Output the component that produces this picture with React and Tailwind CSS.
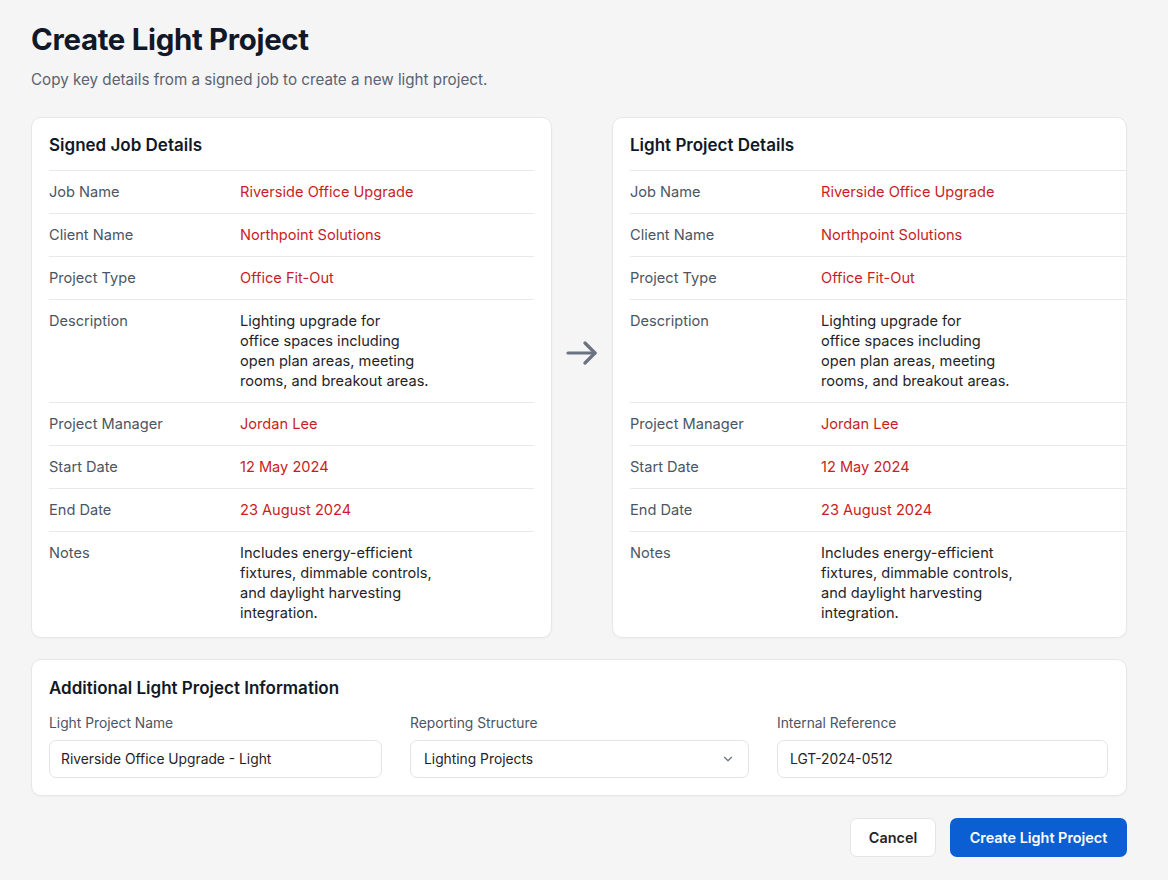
import React from "react";

const rows = [
  ["Job Name", "Riverside Office Upgrade", true],
  ["Client Name", "Northpoint Solutions", true],
  ["Project Type", "Office Fit-Out", true],
  ["Description", ["Lighting upgrade for", "office spaces including", "open plan areas, meeting", "rooms, and breakout areas."], false],
  ["Project Manager", "Jordan Lee", true],
  ["Start Date", "12 May 2024", true],
  ["End Date", "23 August 2024", true],
  ["Notes", ["Includes energy-efficient", "fixtures, dimmable controls,", "and daylight harvesting", "integration."], false],
];

function DetailCard({ title, right }) {
  return (
    <div className={"bg-white border border-[#e6e7ea] rounded-[10px] shadow-[0_1px_2px_rgba(0,0,0,0.03)] pb-[2px] " + (right ? "pl-[17px]" : "px-[17px]")}>
      <div className="h-[53px] flex items-center border-b border-[#e8e9ec]">
        <h2 className="text-[17px] font-semibold text-[#111827] pt-[4px]">{title}</h2>
      </div>
      {rows.map(([label, value, red], i) => (
        <div
          key={label}
          className={"flex pt-[11px] text-[14.6px] leading-[20px] " + (i < rows.length - 1 ? "pb-[11px] border-b border-[#e8e9ec]" : "pb-[12px]")}
        >
          <div className="w-[191px] shrink-0 text-[#4b5563]">{label}</div>
          <div className={red ? "text-[#c81d25]" : "text-[#1f2328]"}>
            {Array.isArray(value)
              ? value.map((l, j) => <div key={j}>{l}</div>)
              : value}
          </div>
        </div>
      ))}
    </div>
  );
}

export default function App() {
  return (
    <div
      className="min-h-[880px] bg-[#f5f5f6] px-[31px] pt-[22px]"
      style={{ fontFamily: "Inter, 'Noto Sans', sans-serif" }}
    >
      <div className="w-[1096px]">
        <h1 className="text-[29.4px] leading-[36px] font-bold text-[#111827] tracking-[-0.3px]">
          Create Light Project
        </h1>
        <p className="mt-[12px] text-[15.2px] leading-[20px] text-[#5b6270]">
          Copy key details from a signed job to create a new light project.
        </p>

        <div className="mt-[27px] grid grid-cols-[521px_60px_515px] items-start">
          <DetailCard title="Signed Job Details" />
          <div className="flex justify-center pt-[224px]">
            <svg width="32" height="24" viewBox="0 0 32 24" fill="none" stroke="#6b7280" strokeWidth="3.2" strokeLinecap="round" strokeLinejoin="round">
              <path d="M2 12h27" />
              <path d="M19 2l10 10-10 10" />
            </svg>
          </div>
          <DetailCard title="Light Project Details" right />
        </div>

        <div className="mt-[21px] bg-white border border-[#e6e7ea] rounded-[10px] shadow-[0_1px_2px_rgba(0,0,0,0.03)] px-[17px] pt-[16px] pb-[17px]">
          <h2 className="text-[17px] leading-[24px] font-semibold text-[#111827]">
            Additional Light Project Information
          </h2>
          <div className="mt-[13px] grid grid-cols-[333px_339px_331px] gap-x-[28px]">
            <div>
              <div className="text-[13.8px] leading-[20px] text-[#4b5563]">Light Project Name</div>
              <div className="mt-[7px] h-[38px] border border-[#e2e4e8] rounded-[7px] flex items-center px-[11px] text-[13.8px] text-[#1f2328]">
                Riverside Office Upgrade - Light
              </div>
            </div>
            <div>
              <div className="text-[13.8px] leading-[20px] text-[#4b5563]">Reporting Structure</div>
              <div className="mt-[7px] h-[38px] border border-[#e2e4e8] rounded-[7px] flex items-center justify-between pl-[13px] pr-[13px] text-[13.8px] text-[#1f2328]">
                <span>Lighting Projects</span>
                <svg width="14" height="14" viewBox="0 0 24 24" fill="none" stroke="#6b7280" strokeWidth="2" strokeLinecap="round" strokeLinejoin="round">
                  <path d="M6 9l6 6 6-6" />
                </svg>
              </div>
            </div>
            <div>
              <div className="text-[13.8px] leading-[20px] text-[#4b5563]">Internal Reference</div>
              <div className="mt-[7px] h-[38px] border border-[#e2e4e8] rounded-[7px] flex items-center px-[12px] text-[13.8px] text-[#1f2328]">
                LGT-2024-0512
              </div>
            </div>
          </div>
        </div>

        <div className="mt-[22px] flex justify-end gap-[14px]">
          <button className="h-[39px] w-[86px] bg-white border border-[#e2e4e8] rounded-[7px] text-[14.4px] font-semibold text-[#1f2328]">
            Cancel
          </button>
          <button className="h-[39px] w-[177px] bg-[#0b5fd3] rounded-[7px] text-[14.4px] font-semibold text-white">
            Create Light Project
          </button>
        </div>
      </div>
    </div>
  );
}
